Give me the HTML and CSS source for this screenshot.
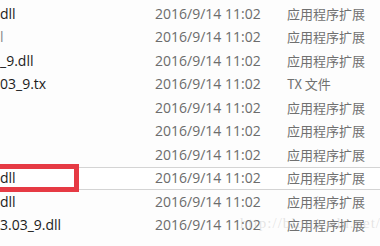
FILE: index.html
```html
<!DOCTYPE html>
<html lang="zh-CN">
<head>
<meta charset="utf-8">
<link rel="stylesheet" href="styles.css">
</head>
<body>
<div class="list">
  <div class="row"><span class="name">dll</span><span class="date">2016/9/14 11:02</span><span class="type">应用程序扩展</span></div>
  <div class="row"><span class="name clip">l</span><span class="date">2016/9/14 11:02</span><span class="type">应用程序扩展</span></div>
  <div class="row"><span class="name">_9.dll</span><span class="date">2016/9/14 11:02</span><span class="type">应用程序扩展</span></div>
  <div class="row"><span class="name">03_9.tx</span><span class="date">2016/9/14 11:02</span><span class="type">TX 文件</span></div>
  <div class="row"><span class="name"></span><span class="date">2016/9/14 11:02</span><span class="type">应用程序扩展</span></div>
  <div class="row"><span class="name"></span><span class="date">2016/9/14 11:02</span><span class="type">应用程序扩展</span></div>
  <div class="row"><span class="name"></span><span class="date">2016/9/14 11:02</span><span class="type">应用程序扩展</span></div>
  <div class="row hover"><span class="name">dll</span><span class="date">2016/9/14 11:02</span><span class="type">应用程序扩展</span><span class="mark"></span></div>
  <div class="row"><span class="name">dll</span><span class="date">2016/9/14 11:02</span><span class="type">应用程序扩展</span></div>
  <div class="row"><span class="name">3.03_9.dll</span><span class="date">2016/9/14 11:02</span><span class="type">应用程序扩展</span></div>
</div>
<div class="watermark">http://blog.csdn.net/</div>
</body>
</html>
```
FILE: styles.css
```css
html, body {
  margin: 0;
  padding: 0;
  background: #fdfdfd;
  width: 380px;
  height: 246px;
  overflow: hidden;
  position: relative;
}
.list {
  padding-top: 2px;
  font-family: "Open Sans", "Noto Sans CJK SC", sans-serif;
  font-size: 14px;
}
.row {
  position: relative;
  display: grid;
  grid-template-columns: 155px 132px 1fr;
  align-items: center;
  height: 23.5px;
  box-sizing: border-box;
}
.row span { white-space: nowrap; line-height: 20px; }
.name { color: #1c1c1c; }
.name.clip { color: #8a8a8a; }
.date { color: #6c6c6c; }
.type {
  color: #707070;
  font-family: "Noto Sans CJK SC", sans-serif;
  font-size: 13px;
}
.row.hover {
  border-top: 1px solid #d4d4d4;
  border-bottom: 1px solid #d4d4d4;
  background: #ffffff;
}
.mark {
  position: absolute;
  left: -10px;
  top: -4px;
  width: 89px;
  height: 28px;
  box-sizing: border-box;
  border: 5px solid #e63a44;
}
.watermark {
  position: absolute;
  left: 240px;
  top: 215px;
  font-family: "Liberation Serif", serif;
  font-size: 15px;
  color: rgba(180, 180, 180, 0.35);
  letter-spacing: 1px;
  white-space: nowrap;
}
```
